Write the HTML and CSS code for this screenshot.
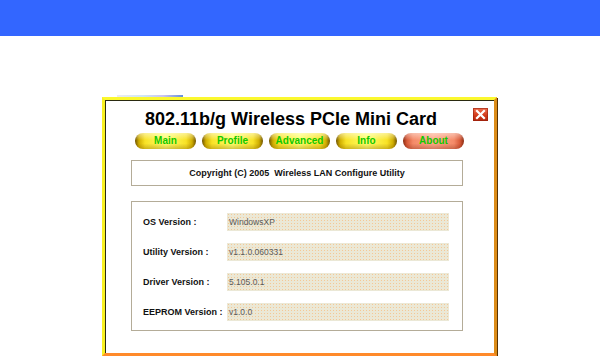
FILE: index.html
```html
<!DOCTYPE html>
<html lang="en">
<head>
    <meta charset="UTF-8">
    <meta name="viewport" content="width=device-width, initial-scale=1.0">
    <title>802.11b/g Wireless PCIe Mini Card - About</title>
    <link rel="stylesheet" href="styles.css">
</head>
<body>
    <header class="topbar"></header>

    <div class="strip"></div>

    <div class="window">
        <div class="title-row">
            <h1 class="title">802.11b/g Wireless PCIe Mini Card</h1>
            <button class="close" title="Close">
                <svg width="15" height="13" viewBox="0 0 15 13">
                    <path d="M4 3 L11 10 M11 3 L4 10" stroke="#fff" stroke-width="2.2" stroke-linecap="square"/>
                </svg>
            </button>
        </div>

        <nav class="tabs">
            <a href="#" class="tab">Main</a>
            <a href="#" class="tab">Profile</a>
            <a href="#" class="tab">Advanced</a>
            <a href="#" class="tab">Info</a>
            <a href="#" class="tab active">About</a>
        </nav>

        <div class="copyright">Copyright (C) 2005&nbsp; Wireless LAN Configure Utility</div>

        <div class="info">
            <div class="row">
                <span class="label">OS Version :</span>
                <span class="field">WindowsXP</span>
            </div>
            <div class="row">
                <span class="label">Utility Version :</span>
                <span class="field">v1.1.0.060331</span>
            </div>
            <div class="row">
                <span class="label">Driver Version :</span>
                <span class="field">5.105.0.1</span>
            </div>
            <div class="row">
                <span class="label">EEPROM Version :</span>
                <span class="field">v1.0.0</span>
            </div>
        </div>
    </div>
</body>
</html>
```

FILE: styles.css
```css
body {
    margin: 0;
    padding: 0;
    background: #fff;
    font-family: "Liberation Sans", Arial, sans-serif;
}
.topbar {
    height: 36px;
    background-color: #3366ff;
}
.strip {
    width: 66px;
    height: 2px;
    margin: 59px 0 0 117px;
    background: linear-gradient(to right, #ececf0, #cfe6f4 40%, #cac4f0 70%, #6690d8);
}
.window {
    box-sizing: border-box;
    width: 395px;
    height: 259px;
    margin-left: 102px;
    border-style: solid;
    border-width: 3px;
    /* top right bottom left */
    border-color: #fbf82e #dc8c18 #ff8a2a #f8f020;
    background: #fff;
    box-shadow: inset 1px 1px 0 #2a2a10, 1px 1px 0 #5a3200;
}
.title-row {
    display: flex;
    align-items: flex-start;
    padding: 8px 6px 0 40px;
}
.title {
    margin: 1px 0 0 0;
    font-size: 18px;
    line-height: 20px;
    font-weight: bold;
    color: #000;
}
.close {
    margin-left: auto;
    width: 15px;
    height: 13px;
    padding: 0;
    border: none;
    background: linear-gradient(to bottom, #f07050, #d03818 60%, #b02810);
    box-shadow: inset 0 0 0 1px rgba(150, 30, 10, 0.6);
    cursor: pointer;
    display: flex;
}
.tabs {
    display: flex;
    gap: 6px;
    margin: 4px 0 0 30px;
}
.tab {
    width: 61px;
    height: 16px;
    border-radius: 8px;
    line-height: 16px;
    text-align: center;
    text-decoration: none;
    font-size: 10px;
    font-weight: bold;
    color: #12c800;
    background:
        linear-gradient(to bottom, rgba(255, 255, 255, 0.5) 0, rgba(255, 255, 255, 0) 45%, rgba(0, 0, 0, 0) 65%, rgba(110, 70, 0, 0.3) 100%),
        linear-gradient(to right, #6e5200 0, #d0ae00 4px, #f8e226 10px, #ffff6a 50%, #f8e226 calc(100% - 10px), #d0ae00 calc(100% - 4px), #6e5200 100%);
}
.tab.active {
    background:
        linear-gradient(to bottom, rgba(255, 255, 255, 0.45) 0, rgba(255, 255, 255, 0) 45%, rgba(0, 0, 0, 0) 65%, rgba(110, 20, 0, 0.3) 100%),
        linear-gradient(to right, #8a2a10 0, #d85a38 4px, #f48a68 10px, #ffa888 50%, #f48a68 calc(100% - 10px), #d85a38 calc(100% - 4px), #8a2a10 100%);
}
.copyright {
    box-sizing: border-box;
    width: 332px;
    height: 26px;
    margin: 11px 0 0 26px;
    border: 1px solid #b4ac98;
    text-align: center;
    font-size: 9px;
    font-weight: bold;
    line-height: 24px;
    color: #111;
}
.info {
    box-sizing: border-box;
    width: 332px;
    height: 130px;
    margin: 15px 0 0 26px;
    padding: 11px 0 0 11px;
    border: 1px solid #b4ac98;
    display: flex;
    flex-direction: column;
    gap: 12px;
}
.row {
    display: flex;
    align-items: center;
}
.label {
    width: 84px;
    font-size: 9px;
    font-weight: bold;
    color: #111;
}
.field {
    box-sizing: border-box;
    width: 222px;
    height: 18px;
    padding-left: 2px;
    line-height: 18px;
    font-size: 8.5px;
    color: #5a5a5a;
    background-color: #ebe8d6;
    background-image: radial-gradient(circle, #f4c896 0.7px, transparent 0.9px);
    background-size: 3px 3px;
}
```
